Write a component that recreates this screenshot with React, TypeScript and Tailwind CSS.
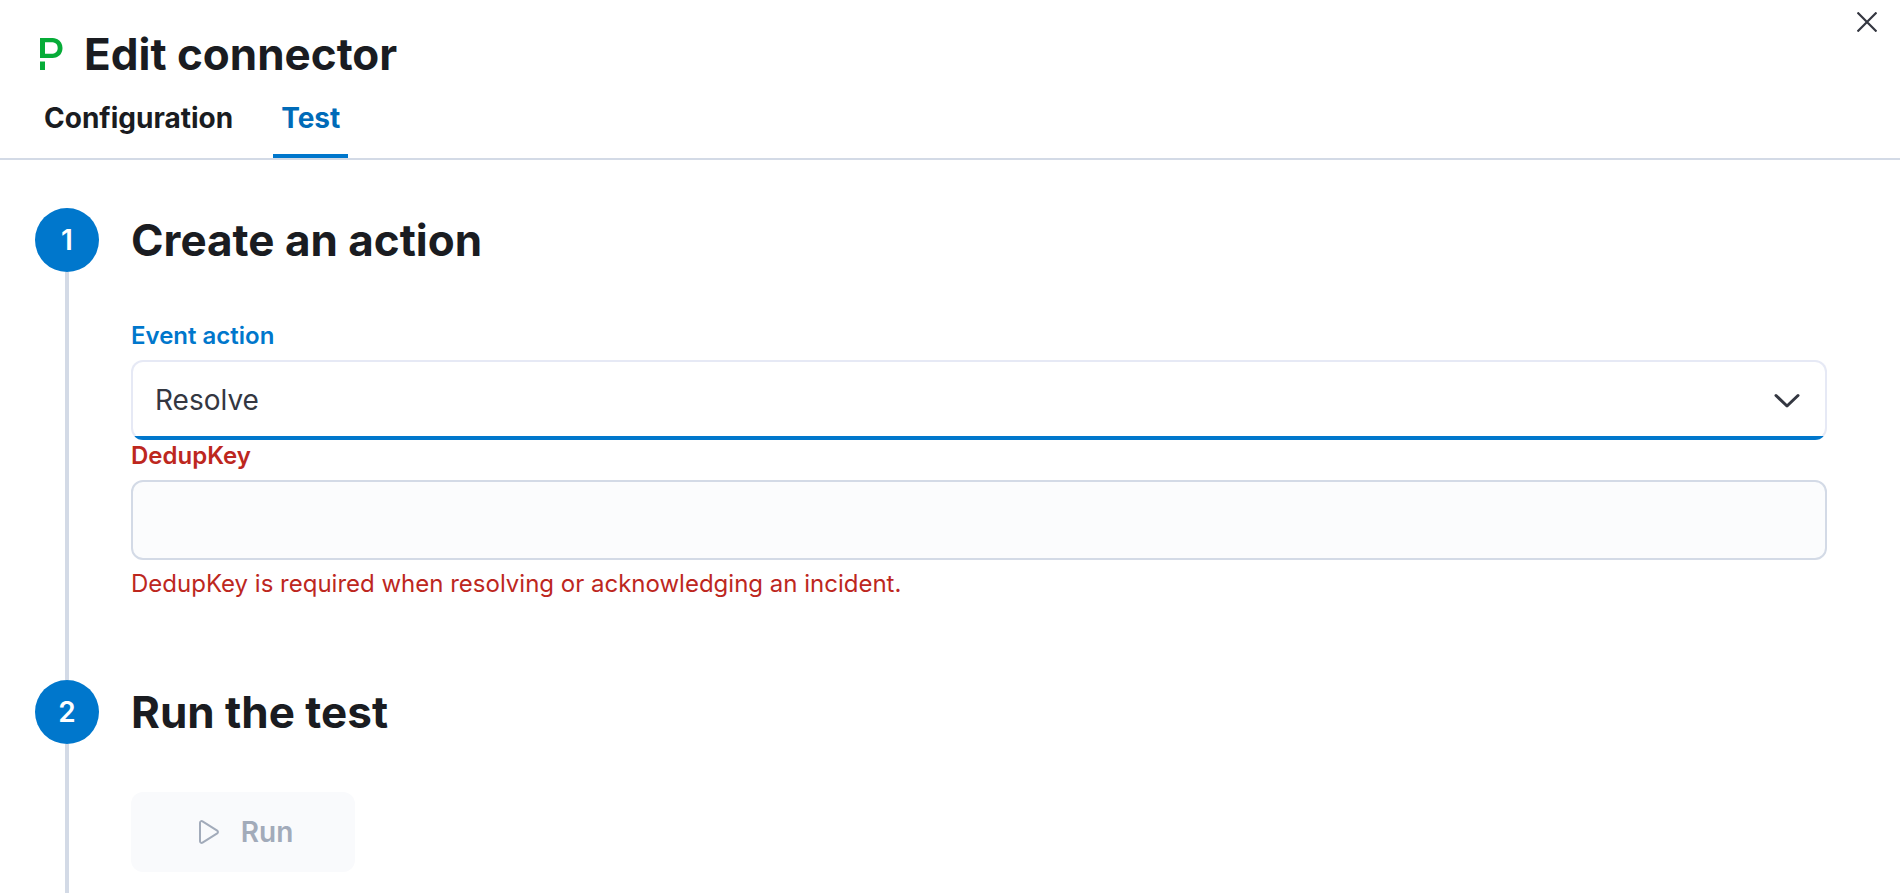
import React from "react";

const tabs = [
  { id: "configuration", label: "Configuration" },
  { id: "test", label: "Test" },
];

const PagerDutyLogo = () => (
  <svg width="24" height="32" viewBox="0 0 24 32" fill="#06ac38" aria-hidden="true">
    <path d="M0 23.5h5V32H0z" />
    <path
      fillRule="evenodd"
      d="M0 0h10.5C13.6 0 15.9.3 17.5 1.2 20.6 2.9 22.5 6 22.5 10c0 4.3-2.1 7.5-5.4 9-1.6.7-3.6 1-6.6 1H0V0zm5 15.8h6.2c4 0 6.5-2 6.5-5.8 0-4.2-2.7-5.8-6.6-5.8H5v11.6z"
    />
  </svg>
);

const CloseIcon = () => (
  <svg width="20" height="20" viewBox="0 0 20 20" fill="none" stroke="#343741" strokeWidth="2.2" aria-hidden="true">
    <path d="M.5.5l19 19M19.5.5l-19 19" />
  </svg>
);

const ArrowDown = () => (
  <svg width="26" height="16" viewBox="0 0 26 16" fill="none" stroke="#343741" strokeWidth="3" strokeLinecap="round" strokeLinejoin="round" aria-hidden="true">
    <path d="M2 3.5L13 14 24 3.5" />
  </svg>
);

const PlayIcon = () => (
  <svg width="20" height="24" viewBox="0 0 20 24" fill="none" stroke="currentColor" strokeWidth="2" strokeLinejoin="round" aria-hidden="true">
    <path d="M1 2.7v18.6c0 1.3 1.4 2.1 2.5 1.4l14.7-9.3c1-.7 1-2.1 0-2.8L3.5 1.3C2.4.6 1 1.4 1 2.7z" />
  </svg>
);

type StepProps = {
  number: number;
  title: string;
  className?: string;
  children: React.ReactNode;
};

const Step = ({ number, title, className = "", children }: StepProps) => (
  <li className={`flex gap-8 ${className}`}>
    <div className="flex w-16 shrink-0 flex-col items-center">
      <span className="flex h-16 w-16 items-center justify-center rounded-full bg-[#0077cc] text-[28px] font-semibold text-white">
        {number}
      </span>
      <span className="w-1 flex-1 bg-[#d3dae6]" />
    </div>
    <div className="min-w-0 flex-1">
      <h2 className="text-[44px] font-bold leading-16 text-[#1a1c21]">{title}</h2>
      <div className="pt-12">{children}</div>
    </div>
  </li>
);

const App = () => {
  const [activeTab, setActiveTab] = React.useState("test");
  const [eventAction, setEventAction] = React.useState("resolve");
  const [dedupKey, setDedupKey] = React.useState("");

  return (
    <div className="flex min-h-screen flex-col bg-white font-['Inter',sans-serif] text-[#343741]">
      {/* Header */}
      <header className="border-b-2 border-[#d3dae6]">
        <div className="flex items-start justify-between pl-10 pr-[23px]">
          <div className="flex items-center gap-5 pt-6">
            <PagerDutyLogo />
            <h1 className="text-[44px] font-bold leading-[60px] text-[#1a1c21]">Edit connector</h1>
          </div>
          <button type="button" aria-label="Close" className="pt-3">
            <CloseIcon />
          </button>
        </div>
        <div role="tablist" className="flex gap-8 pl-9">
          {tabs.map((tab) => (
            <button
              key={tab.id}
              type="button"
              role="tab"
              aria-selected={activeTab === tab.id}
              onClick={() => setActiveTab(tab.id)}
              className={`border-b-4 px-2 pb-4 pt-3.5 text-[28px] font-bold leading-10 ${
                activeTab === tab.id ? "border-[#0077cc] text-[#006bb8]" : "border-transparent text-[#1a1c21]"
              }`}
            >
              {tab.label}
            </button>
          ))}
        </div>
      </header>

      {/* Steps */}
      <ol className="flex flex-1 flex-col pl-[35px] pr-[73px] pt-12">
        <Step number={1} title="Create an action">
          <div className="flex flex-col">
            <label htmlFor="event-action" className="pb-2 text-2xl font-semibold text-[#0077cc]">
              Event action
            </label>
            <div className="grid items-center">
              <select
                id="event-action"
                value={eventAction}
                onChange={(e) => setEventAction(e.target.value)}
                className="col-start-1 row-start-1 h-20 w-full appearance-none rounded-xl border-2 border-[#e6e9f5] bg-white bg-[linear-gradient(to_top,#0077cc_4px,transparent_4px)] bg-origin-border px-[22px] text-[28px] outline-none [border-bottom-color:transparent]"
              >
                <option value="trigger">Trigger</option>
                <option value="resolve">Resolve</option>
                <option value="acknowledge">Acknowledge</option>
              </select>
              <span className="pointer-events-none col-start-1 row-start-1 mr-[27px] justify-self-end">
                <ArrowDown />
              </span>
            </div>
            <label htmlFor="dedup-key" className="pb-2 text-2xl font-semibold text-[#bd271e]">
              DedupKey
            </label>
            <input
              id="dedup-key"
              type="text"
              value={dedupKey}
              onChange={(e) => setDedupKey(e.target.value)}
              aria-invalid="true"
              aria-describedby="dedup-key-error"
              className="h-20 w-full rounded-xl border-2 border-[#d3dae6] bg-[#fbfcfd] px-[22px] text-[28px] outline-none"
            />
            <p id="dedup-key-error" className="pb-20 pt-2 text-2xl text-[#bd271e]">
              DedupKey is required when resolving or acknowledging an incident.
            </p>
          </div>
        </Step>
        <Step number={2} title="Run the test" className="flex-1">
          <button
            type="button"
            disabled
            className="flex h-20 w-56 items-center justify-center gap-[22px] rounded-xl bg-[#f9fafc] pl-1.5 text-[28px] font-semibold text-[#a2abba]"
          >
            <PlayIcon />
            Run
          </button>
        </Step>
      </ol>
    </div>
  );
};

export default App;
